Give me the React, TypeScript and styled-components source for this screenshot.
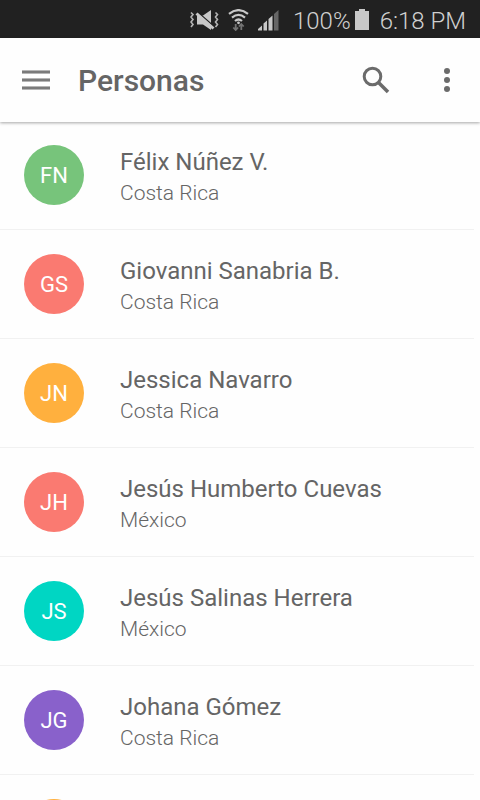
import React from "react";
import styled, { createGlobalStyle } from "styled-components";

const GlobalStyle = createGlobalStyle`
  * { box-sizing: border-box; }
  html, body { margin: 0; padding: 0; }
  body {
    background: #fefefe;
    color: #656565;
    font-family: Roboto, "Liberation Sans", sans-serif;
  }
`;

const Screen = styled.div`
  display: flex;
  flex-direction: column;
  height: 100vh;
  overflow: hidden;
`;

const StatusBar = styled.div`
  display: flex;
  flex: none;
  align-items: center;
  justify-content: flex-end;
  height: 38px;
  padding: 2px 14px 0 0;
  background: #212121;
  color: #d0d0d0;
  font-size: 24px;
  font-weight: 300;
  line-height: 28px;
  white-space: nowrap;
`;

const StatusText = styled.span`
  padding-top: 1px;
`;

const StatusGlyphs = styled.div`
  display: flex;
  align-items: center;
  gap: 9px;
  margin-right: 14px;

  svg { display: block; }
`;

const BatteryIcon = styled.svg`
  display: block;
  margin: 0 11px 0 4px;
`;

const AppBar = styled.header`
  position: relative;
  z-index: 1;
  display: flex;
  flex: none;
  align-items: center;
  height: 84px;
  padding: 0 9px 0 12px;
  background: #fefefe;
  box-shadow: 0 1px 3px rgba(0, 0, 0, 0.35);
`;

const IconButton = styled.button`
  display: flex;
  align-items: center;
  justify-content: center;
  width: 48px;
  height: 48px;
  padding: 0;
  border: 0;
  background: transparent;
  color: #6b6b6b;
  cursor: pointer;
`;

const Title = styled.h1`
  flex: 1;
  margin: 0 0 0 18px;
  padding-top: 2px;
  font-size: 30px;
  font-weight: 500;
  line-height: 36px;
`;

const Actions = styled.div`
  display: flex;
  gap: 23px;
`;

const List = styled.ul`
  flex: 1;
  min-height: 0;
  margin: -1px 0 0;
  padding: 0 6px 0 0;
  overflow: hidden;
  list-style: none;
`;

const Row = styled.li`
  display: flex;
  align-items: flex-start;
  gap: 36px;
  height: 109px;
  padding: 24px 18px 0 24px;
  border-bottom: 1px solid #f1f1f1;
`;

const Avatar = styled.div<{ $color: string }>`
  display: flex;
  flex: none;
  align-items: center;
  justify-content: center;
  width: 60px;
  height: 60px;
  padding-top: 1px;
  border-radius: 50%;
  background: ${(p) => p.$color};
  color: #fff;
  font-size: 22px;
  line-height: 28px;
`;

const Details = styled.div`
  min-width: 0;
  padding-top: 2px;
  white-space: nowrap;
`;

const Name = styled.div`
  font-size: 24px;
  line-height: 30px;
`;

const Country = styled.div`
  font-size: 21px;
  font-weight: 300;
  line-height: 32px;
`;

interface Person {
  initials: string;
  name: string;
  country: string;
  color: string;
}

const people: Person[] = [
  { initials: "FN", name: "Félix Núñez V.", country: "Costa Rica", color: "#77c47b" },
  { initials: "GS", name: "Giovanni Sanabria B.", country: "Costa Rica", color: "#fa7a71" },
  { initials: "JN", name: "Jessica Navarro", country: "Costa Rica", color: "#ffb03e" },
  { initials: "JH", name: "Jesús Humberto Cuevas", country: "México", color: "#fa7a71" },
  { initials: "JS", name: "Jesús Salinas Herrera", country: "México", color: "#00d6c3" },
  { initials: "JG", name: "Johana Gómez", country: "Costa Rica", color: "#8961cb" },
  { initials: "", name: "", country: "", color: "#ffb03e" },
];

const VibrateMuteIcon = () => (
  <svg width="29" height="22" viewBox="0 0 29 22" fill="none" aria-label="Vibrate">
    <path
      d="M1 3.500l2 2-2 2.500 2 2.500-2 2.500 2 2.500-2 2.500M25.500 3.500l2 2-2 2.500 2 2.500-2 2.500 2 2.500-2 2.500"
      stroke="#b4b4b4"
      strokeWidth="1.600"
    />
    <path d="M7 6.500h6L21 1v20L13 15.500H7z" fill="#c8c8c8" />
    <path d="M7 2.500L24 17.500" stroke="#212121" strokeWidth="1.600" />
    <path d="M6.500 4.500L23.500 19.500" stroke="#c8c8c8" strokeWidth="3" />
  </svg>
);

const WifiIcon = () => (
  <svg width="21" height="22" viewBox="0 0 21 22" fill="none" aria-label="Wi-Fi">
    <path d="M1 4.800Q10.500-2.600 20 4.800M4 8.600Q10.500 3.200 17 8.600M7 12Q10.500 9 14 12" stroke="#c8c8c8" strokeWidth="2.200" />
    <circle cx="10.500" cy="13.800" r="1.400" fill="#c8c8c8" />
    <path d="M7.700 15v6M5.300 18.500l2.400 2.500 2.400-2.500M13.300 21v-6M10.900 17.500l2.400-2.500 2.400 2.500" stroke="#747474" strokeWidth="1.800" />
  </svg>
);

const SignalIcon = () => (
  <svg width="21" height="22" viewBox="0 0 21 22" aria-label="Signal">
    <path d="M0 21.500v-1.500l4-3.500v5zM5.500 21.500v-7L9 11.500v10zM10.500 21.500V10l4-3.500v15z" fill="#c8c8c8" />
    <path d="M16 21.500V5l4.500-4v20.500z" fill="#666" />
  </svg>
);

const MenuIcon = () => (
  <svg width="28" height="20" viewBox="0 0 28 20" fill="currentColor" aria-hidden="true">
    <path d="M0 0h28v4H0zM0 8h28v4H0zM0 16h28v4H0z" opacity="0.5" />
    <path d="M0 1h28v2H0zM0 9h28v2H0zM0 17h28v2H0z" opacity="0.8" />
  </svg>
);

const SearchIcon = () => (
  <svg width="28" height="28" viewBox="0 0 28 28" fill="none" stroke="currentColor" aria-hidden="true">
    <circle cx="10.500" cy="10.500" r="8.300" strokeWidth="3" />
    <path d="M16.500 16.500L26 26" strokeWidth="3.600" />
  </svg>
);

const MoreIcon = () => (
  <svg width="6" height="26" viewBox="0 0 6 26" fill="currentColor" aria-hidden="true">
    <circle cx="3" cy="4" r="3" />
    <circle cx="3" cy="13" r="3" />
    <circle cx="3" cy="22" r="3" />
  </svg>
);

export default function App() {
  return (
    <Screen>
      <GlobalStyle />
      <StatusBar>
        <StatusGlyphs>
          <VibrateMuteIcon />
          <WifiIcon />
          <SignalIcon />
        </StatusGlyphs>
        <StatusText>100%</StatusText>
        <BatteryIcon width="14" height="22" viewBox="0 0 14 22" aria-label="Battery">
          <path d="M4 0h6v2h4v19H0V2h4z" fill="#c8c8c8" />
        </BatteryIcon>
        <StatusText>6:18 PM</StatusText>
      </StatusBar>
      <AppBar>
        <IconButton type="button" aria-label="Menu">
          <MenuIcon />
        </IconButton>
        <Title>Personas</Title>
        <Actions>
          <IconButton type="button" aria-label="Search">
            <SearchIcon />
          </IconButton>
          <IconButton type="button" aria-label="More options">
            <MoreIcon />
          </IconButton>
        </Actions>
      </AppBar>
      <List>
        {people.map((person, index) => (
          <Row key={index}>
            <Avatar $color={person.color}>{person.initials}</Avatar>
            <Details>
              <Name>{person.name}</Name>
              <Country>{person.country}</Country>
            </Details>
          </Row>
        ))}
      </List>
    </Screen>
  );
}
